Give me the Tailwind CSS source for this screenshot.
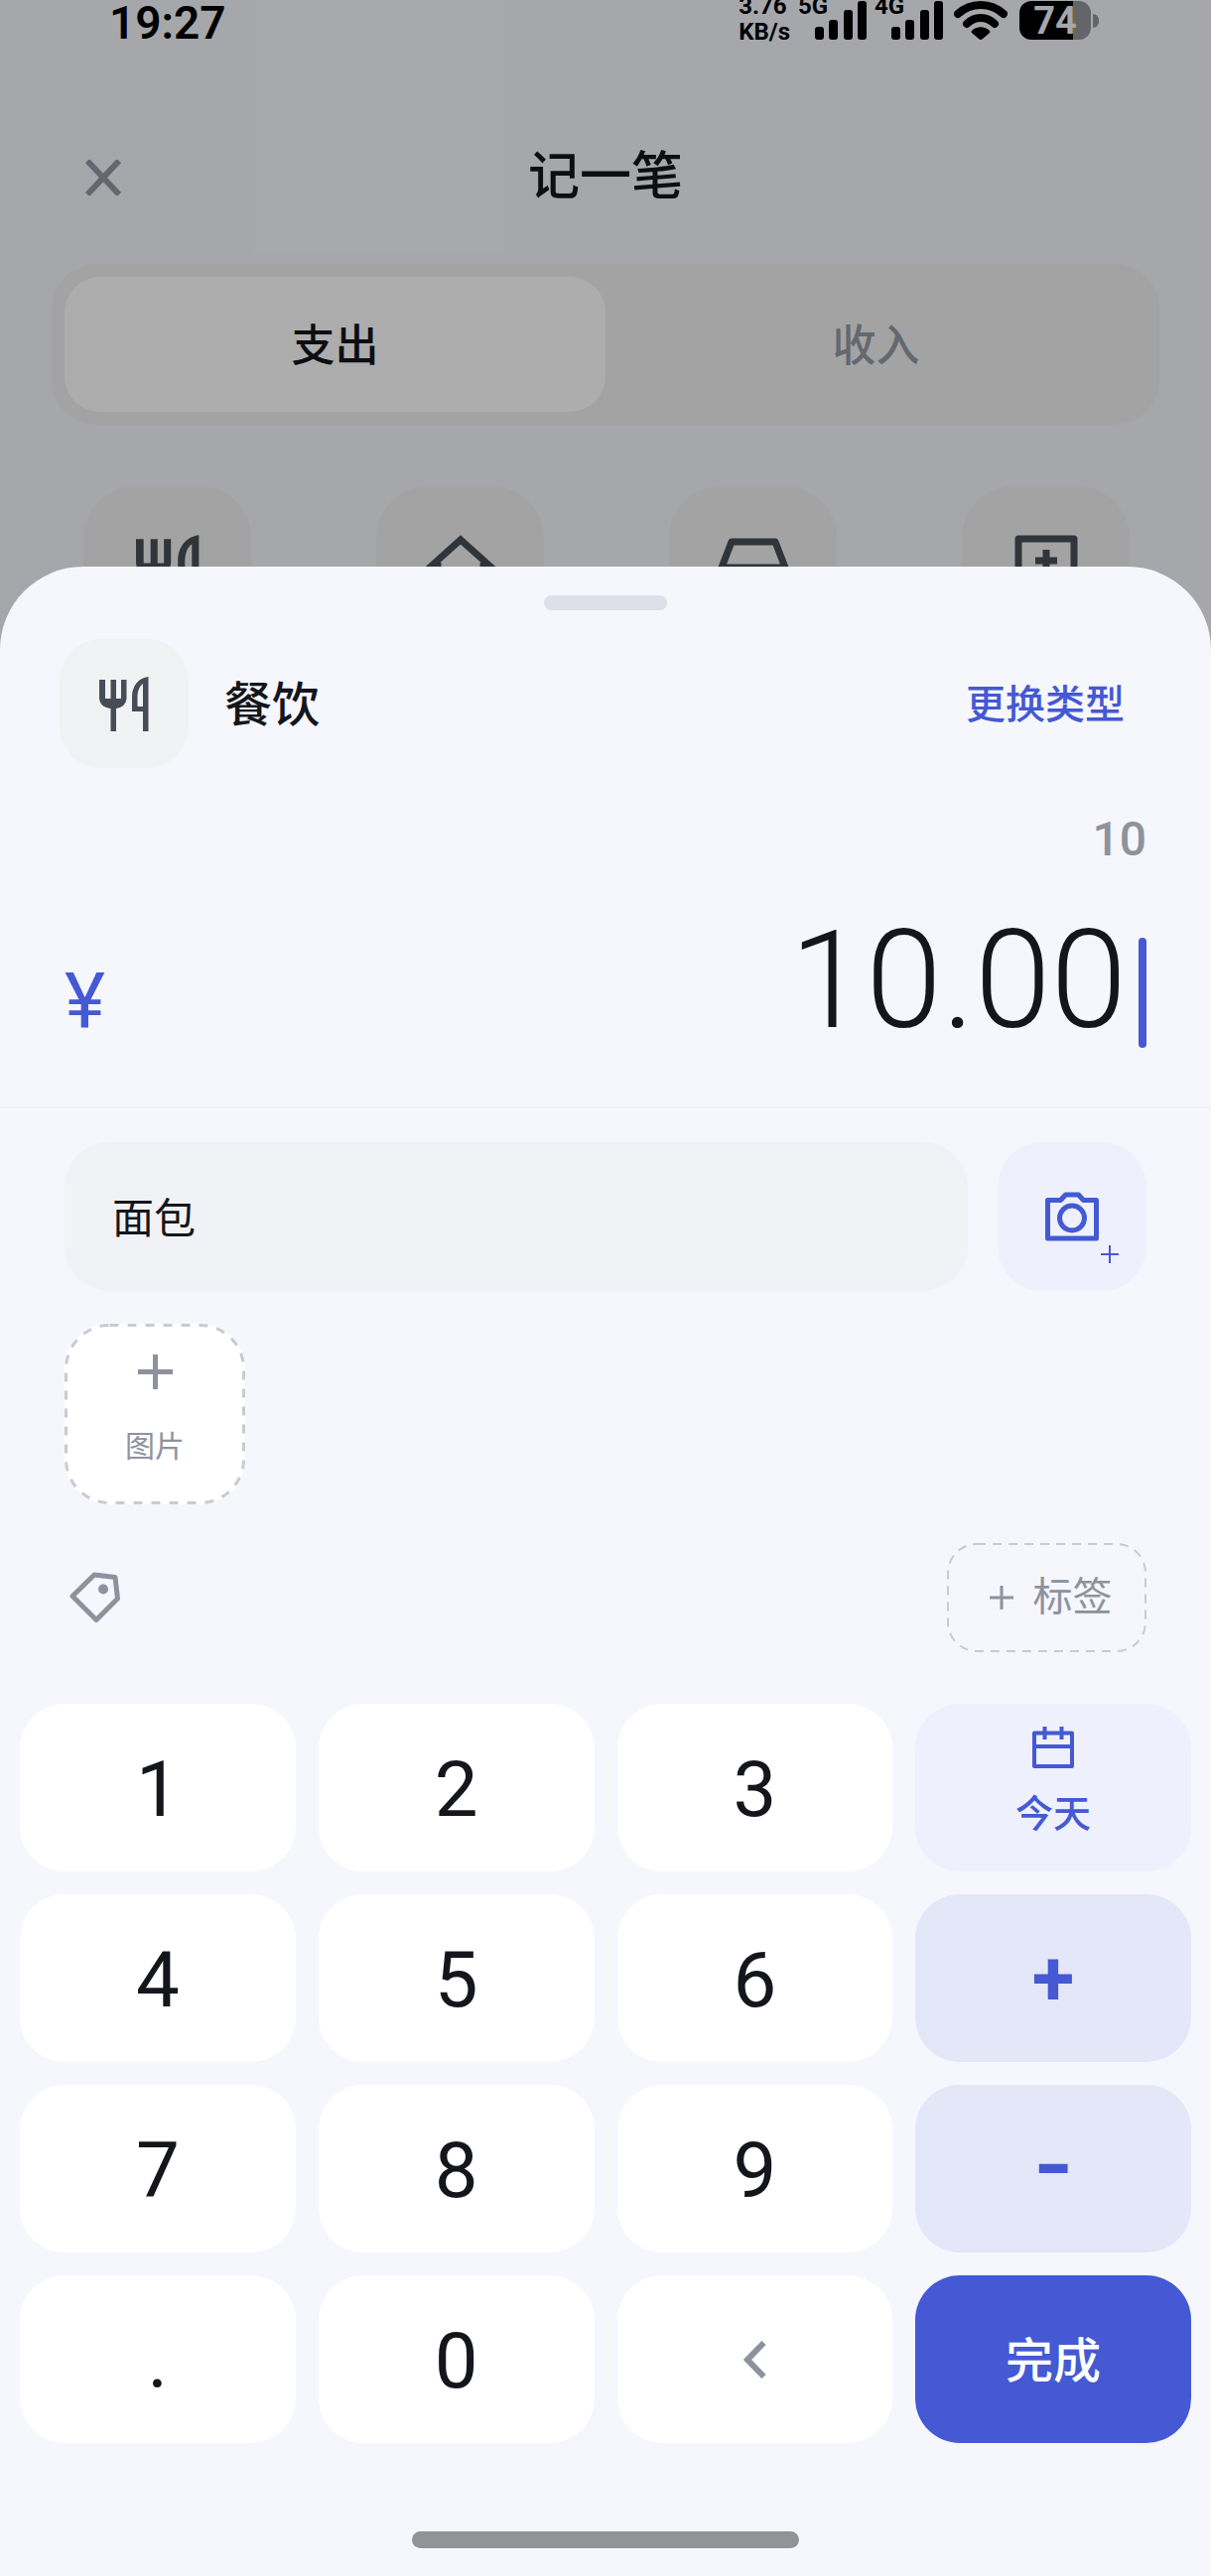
<!DOCTYPE html>
<html lang="zh-CN">
<head>
  <meta charset="UTF-8">
  <meta name="viewport" content="width=device-width, initial-scale=1.0">
  <title>记一笔</title>
  <script src="https://cdn.jsdelivr.net/npm/@tailwindcss/browser@4"></script>
</head>
<body class="relative min-h-screen overflow-x-hidden bg-[#f5f7fd] font-[Roboto,'Noto_Sans_CJK_SC',sans-serif] text-[#14161b]">
  <!-- Shared icons -->
  <svg class="hidden">
    <symbol id="icon-food" viewBox="0 0 50 55">
      <path fill="currentColor" d="M0 3h6v19h5.500V3H17v19h5V3h5.500v18c0 6-4 10-10.500 11v23h-5.500V32C4 31 0 27 0 21z"/>
      <path fill="currentColor" fill-rule="evenodd" d="M49.500 0v55H44V35H33V20C33 9 40 1 49.500 0zM44 7c-4 3-5.500 8-5.500 14v9H44z"/>
    </symbol>
    <symbol id="icon-signal" viewBox="0 0 52 40">
      <rect x="0" y="27" width="9" height="13" rx="3"/>
      <rect x="14" y="20" width="9" height="20" rx="3"/>
      <rect x="29" y="10" width="9" height="30" rx="3"/>
      <rect x="43" y="1" width="9" height="39" rx="3"/>
    </symbol>
  </svg>

  <!-- Page behind the sheet -->
  <header class="grid grid-cols-3 items-center px-[84px] pt-[139px]">
    <button class="flex h-20 w-10 items-center justify-center text-[#939aa5]" aria-label="关闭">
      <svg class="h-9 w-9" viewBox="0 0 36 36" fill="none" stroke="currentColor" stroke-width="6"><path d="M2 1l32 34M34 1L2 35"/></svg>
    </button>
    <h1 class="text-center text-[52px] leading-20 font-medium">记一笔</h1>
  </header>

  <main>
    <div class="mx-[52px] mt-[47px] grid grid-cols-2 rounded-[45px] bg-[#f0f1f2] p-[13px]">
      <button class="h-[136px] rounded-[36px] bg-white pt-1 text-[44px] font-medium">支出</button>
      <button class="h-[136px] rounded-[36px] pt-1 text-[44px] font-medium text-[#939aa5]">收入</button>
    </div>

    <div class="mt-[62px] flex justify-between pr-[82px] pl-[84px] text-[#474d58]">
      <button class="flex h-[169px] w-[169px] items-center justify-center rounded-[52px] bg-[#f1f1f2]" aria-label="餐饮">
        <svg class="h-[71px] w-16"><use href="#icon-food"/></svg>
      </button>
      <button class="flex h-[169px] w-[169px] items-center justify-center rounded-[52px] bg-[#f1f1f2]" aria-label="住房">
        <svg class="h-[72px] w-[84px]" viewBox="0 0 84 72" fill="none" stroke="currentColor" stroke-width="7"><path d="M4 39L42 5l38 34M19 28v40h46V28"/></svg>
      </button>
      <button class="flex h-[169px] w-[169px] items-center justify-center rounded-[52px] bg-[#f1f1f2]" aria-label="交通">
        <svg class="h-[66px] w-[72px]" viewBox="0 0 72 66" fill="none" stroke="currentColor" stroke-width="7" stroke-linejoin="round"><path d="M14 4h44l10 26v26H4V30zM4 30h64M14 56v9M58 56v9"/></svg>
      </button>
      <button class="flex h-[169px] w-[169px] items-center justify-center rounded-[52px] bg-[#f1f1f2]" aria-label="医疗">
        <svg class="h-[72px] w-16" viewBox="0 0 64 72" fill="none" stroke="currentColor" stroke-width="7" stroke-linejoin="round"><path d="M4 4h56v64H4zM32 15v22M21 26h22"/></svg>
      </button>
    </div>
  </main>

  <!-- Dim layer -->
  <div class="absolute inset-0 bg-black/32"></div>

  <!-- Status bar -->
  <div class="absolute inset-x-0 top-0 flex h-[45px] items-end justify-between pr-[113px] pl-[110px] text-black">
    <span class="text-[46px] leading-[44px] font-semibold">19:27</span>
    <div class="flex h-full items-end">
      <div class="mr-2 flex flex-col text-[24px] leading-[26px] font-bold">
        <span>3.76</span>
        <span>KB/s</span>
      </div>
      <div class="relative mr-2 flex w-[69px] justify-end pb-[5px]">
        <span class="absolute bottom-[26px] left-0 text-[24px] leading-[26px] font-bold">5G</span>
        <svg class="h-10 w-[52px]"><use href="#icon-signal"/></svg>
      </div>
      <div class="relative mr-[11px] flex w-[69px] justify-end pb-[5px]">
        <span class="absolute bottom-[26px] left-0 text-[24px] leading-[26px] font-bold">4G</span>
        <svg class="h-10 w-[52px]"><use href="#icon-signal"/></svg>
      </div>
      <svg class="mr-3 mb-[5px] h-10 w-[54px]" viewBox="0 0 54 40" fill="none" stroke="#000" stroke-width="8" stroke-linecap="round">
        <path d="M4 14C17 2 37 2 50 14M13 24c8-8 20-8 28 0"/>
        <path fill="#000" stroke="none" d="M18 31c5-5 13-5 18 0 1 1 0 2-1 3l-6 5c-1.500 1.500-2.500 1.500-4 0l-6-5c-1-1-2-2-1-3z"/>
      </svg>
      <div class="mb-[5px] flex h-[39px] w-[72px] items-center justify-center rounded-xl bg-linear-to-r from-black from-75% to-[#646568] to-75% text-[38px] leading-10 font-bold text-[#a6a7ab]">74</div>
      <div class="mb-[17px] ml-[2px] h-[14px] w-[6px] rounded-r-full bg-[#646568]"></div>
    </div>
  </div>

  <!-- Entry sheet -->
  <section class="absolute inset-x-0 bottom-0 rounded-t-[84px] bg-[#f5f7fd] pt-[29px] pb-7">
    <div class="mx-auto h-[15px] w-[124px] rounded-full bg-[#dde0e8]"></div>

    <div class="mt-[29px] flex items-center px-[60px]">
      <div class="flex h-[130px] w-[130px] items-center justify-center rounded-[42px] bg-[#f1f2f4] text-[#474d58]">
        <svg class="h-[55px] w-[50px]"><use href="#icon-food"/></svg>
      </div>
      <h2 class="ml-9 pt-1 text-[48px] font-medium">餐饮</h2>
      <button class="ml-auto px-[27px] pt-1 text-[40px] font-medium text-[#4459d3]">更换类型</button>
    </div>

    <div class="mt-[42px] px-[65px] text-right text-[48px] leading-[60px] font-medium text-[#8e929e]">10</div>
    <div class="mt-8 flex items-baseline border-b-2 border-[#f0f1f5] px-[65px] pb-[47px]">
      <span class="text-[78px] leading-20 text-[#4459d3]">¥</span>
      <span class="ml-auto text-[138px] leading-[160px] font-light">10.00</span>
      <span class="mb-3 ml-3 h-[111px] w-2 self-end rounded-full bg-[#4459d3]"></span>
    </div>

    <!-- Note and camera -->
    <div class="mt-[34px] flex gap-[30px] px-[65px]">
      <input type="text" value="面包" aria-label="备注" class="h-[150px] min-w-0 flex-1 rounded-[45px] bg-[#f1f2f6] px-12 pb-1 text-[42px] outline-none">
      <button class="relative flex h-[150px] w-[150px] items-center justify-center rounded-[45px] bg-[#eef1fd] text-[#4459d3]" aria-label="拍照">
        <svg class="h-[50px] w-[54px]" viewBox="0 0 54 50" fill="none" stroke="currentColor" stroke-width="5" stroke-linejoin="round">
          <path d="M2.500 8.500h13l5-5.500h13l5 5.500h13v38.500h-49z"/>
          <circle cx="27" cy="26.500" r="12.500"/>
        </svg>
        <svg class="absolute right-7 bottom-7 h-[18px] w-[18px]" viewBox="0 0 18 18" stroke="currentColor" stroke-width="2"><path d="M9 0v18M0 9h18"/></svg>
      </button>
    </div>

    <!-- Pictures -->
    <div class="mt-[33px] px-[65px]">
      <button class="relative flex h-[182px] w-[182px] flex-col items-center rounded-[45px] bg-white pt-[31px] text-[#8e929e]">
        <svg class="absolute inset-0 h-full w-full" fill="none" stroke="#c9cbd1" stroke-width="3" stroke-dasharray="9 9"><rect x="1.500" y="1.500" width="179" height="179" rx="44"/></svg>
        <svg class="h-[35px] w-[35px]" viewBox="0 0 35 35" stroke="currentColor" stroke-width="5"><path d="M17.500 0v35M0 17.500h35"/></svg>
        <span class="mt-[38px] text-[30px] leading-10">图片</span>
      </button>
    </div>

    <!-- Tags -->
    <div class="mt-[39px] flex items-center justify-between pr-[65px] pl-[70px] text-[#8e929e]">
      <svg class="h-[52px] w-[52px]" viewBox="0 0 52 52" fill="none" stroke="currentColor" stroke-width="5" stroke-linejoin="round">
        <path d="M25 3l21 2.500L48.500 27 27 48.500 3 24.500z"/>
        <circle cx="34" cy="17.500" r="5" fill="currentColor" stroke="none"/>
      </svg>
      <button class="relative flex h-[110px] w-[201px] items-center justify-center gap-5 text-[40px]">
        <svg class="absolute inset-0 h-full w-full" fill="none" stroke="#c9cbd1" stroke-width="2" stroke-dasharray="9 7"><rect x="1" y="1" width="199" height="108" rx="29"/></svg>
        <svg class="ml-2 h-6 w-6" viewBox="0 0 24 24" stroke="currentColor" stroke-width="3"><path d="M12 0v24M0 12h24"/></svg>
        <span>标签</span>
      </button>
    </div>

    <!-- Keypad -->
    <div class="mt-[52px] grid auto-rows-[169px] grid-cols-4 gap-[23px] px-5 text-[78px] leading-20">
      <button class="rounded-[45px] bg-white pt-1">1</button>
      <button class="rounded-[45px] bg-white pt-1">2</button>
      <button class="rounded-[45px] bg-white pt-1">3</button>
      <button class="flex flex-col items-center rounded-[45px] bg-[#eef1fd] pt-[23px] text-[#4459d3]">
        <svg class="h-[42px] w-[42px]" viewBox="0 0 42 42" fill="none" stroke="currentColor" stroke-width="4" stroke-linejoin="round"><path d="M2 6.500h38V40H2zM2 20h38M12.500 0v13M29.500 0v13"/></svg>
        <span class="mt-[18px] text-[38px] leading-[56px] font-medium">今天</span>
      </button>

      <button class="rounded-[45px] bg-white pt-1">4</button>
      <button class="rounded-[45px] bg-white pt-1">5</button>
      <button class="rounded-[45px] bg-white pt-1">6</button>
      <button class="rounded-[45px] bg-[#e3e7f7] font-bold text-[#4459d3]">+</button>

      <button class="rounded-[45px] bg-white pt-1">7</button>
      <button class="rounded-[45px] bg-white pt-1">8</button>
      <button class="rounded-[45px] bg-white pt-1">9</button>
      <button class="rounded-[45px] bg-[#e3e7f7] pb-3 font-[Inter,sans-serif] text-[88px] font-semibold text-[#4459d3]">-</button>

      <button class="rounded-[45px] bg-white pt-1">.</button>
      <button class="rounded-[45px] bg-white pt-1">0</button>
      <button class="flex items-center justify-center rounded-[45px] bg-white text-[#8e929e]" aria-label="退格">
        <svg class="h-[38px] w-6" viewBox="0 0 24 38" fill="none" stroke="currentColor" stroke-width="6"><path d="M21.500 2L5 19l16.500 17"/></svg>
      </button>
      <button class="rounded-[45px] bg-[#4459d3] pt-1 text-[48px] font-medium text-white">完成</button>
    </div>

    <!-- Home indicator -->
    <div class="mx-auto mt-[89px] h-[17px] w-[390px] rounded-full bg-[#919397]"></div>
  </section>
</body>
</html>
